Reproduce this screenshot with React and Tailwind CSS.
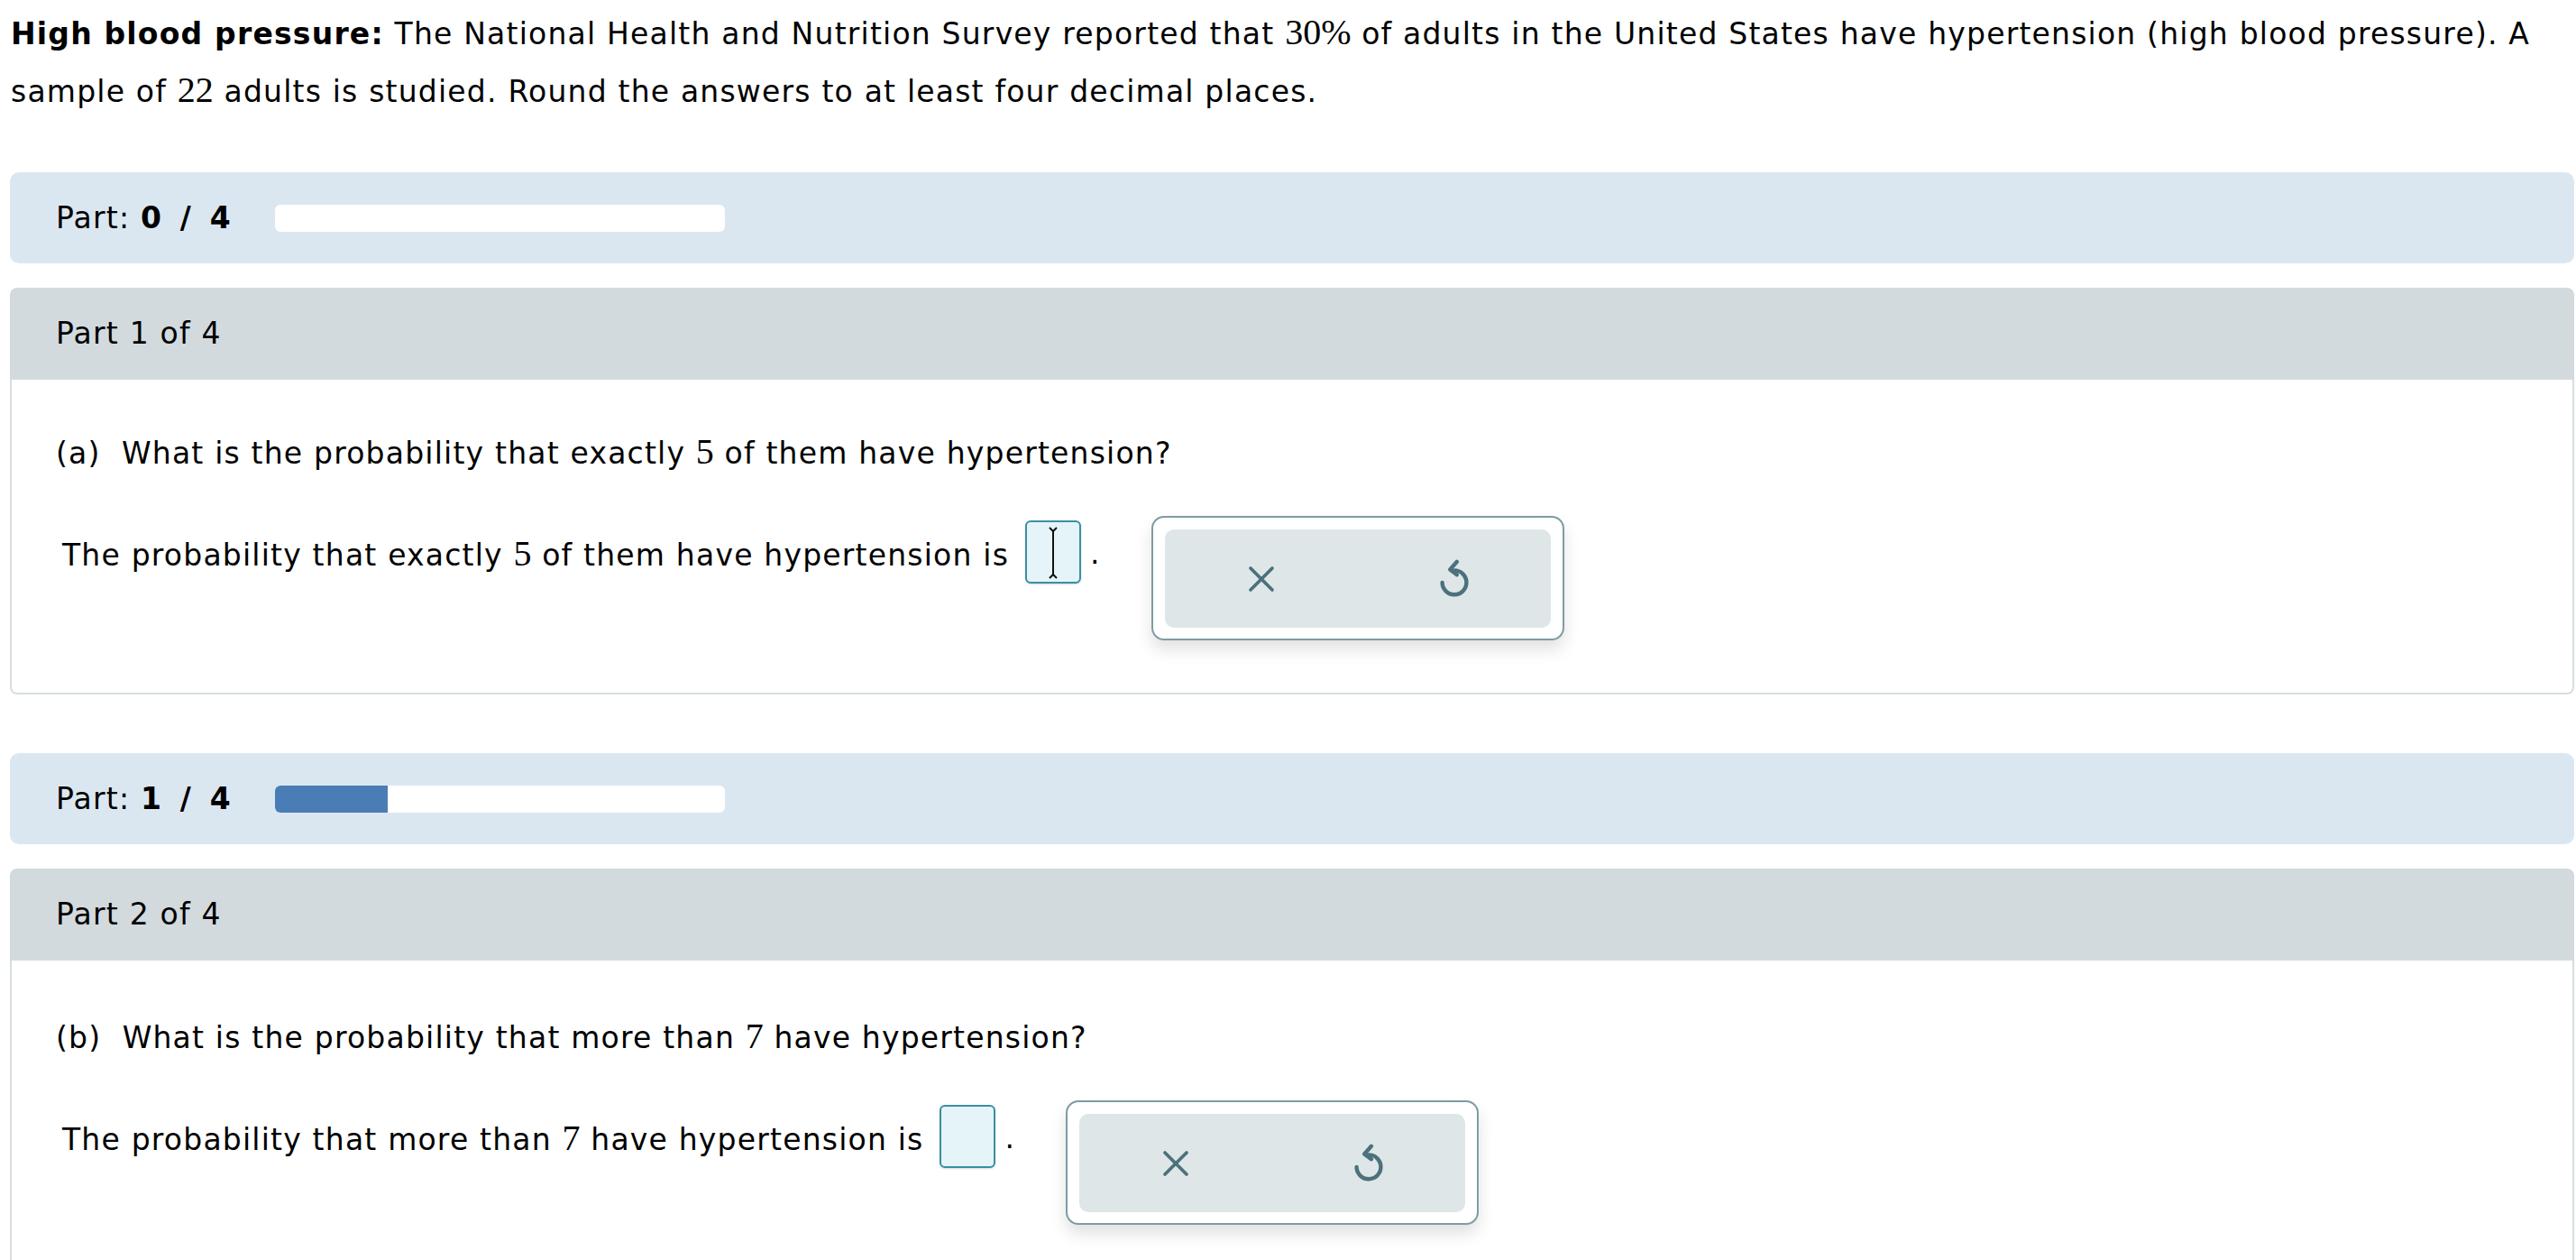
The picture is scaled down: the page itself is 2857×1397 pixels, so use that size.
import React from 'react';

const sans = { fontFamily: '"DejaVu Sans", Verdana, sans-serif' };

const M = ({ children }) => (
  <span className="text-[40px] tracking-normal" style={{ fontFamily: '"Liberation Serif", "Times New Roman", serif' }}>
    {children}
  </span>
);

const XIcon = () => (
  <svg width="36" height="36" viewBox="0 0 24 24" fill="none" stroke="#4b717c" strokeWidth="2.5" strokeLinecap="round">
    <path d="M4 4 L20 20" />
    <path d="M20 4 L4 20" />
  </svg>
);

const UndoIcon = () => (
  <svg width="46" height="50" viewBox="0 0 24 26" fill="none" stroke="#4b717c" strokeWidth="2.3" strokeLinecap="round" strokeLinejoin="round">
    <path d="M12 8 A7 7 0 1 1 5 15" />
    <path d="M13.5 3 L9.5 7.5 L13.5 10.5" />
  </svg>
);

const ProgressBar = ({ done }) => (
  <div className="flex h-[101px] items-center rounded-[10px] bg-[#dbe7f0] pl-[51px] text-[33px] tracking-[1.2px]">
    <span>
      Part: <b className="[word-spacing:7px]">{done} / 4</b>
    </span>
    <div className="ml-[48px] flex h-[30px] w-[499px] overflow-hidden rounded-[6px] bg-white">
      <div className="h-full bg-[#4a7db5]" style={{ width: `${(done / 4) * 100}%` }} />
    </div>
  </div>
);

const AnswerBox = ({ cursor }) => (
  <div className="relative mt-[5px] h-[70px] w-[62px] rounded-[6px] border-2 border-[#3a8fa3] bg-[#e5f4f9] shadow-[0_1px_2px_rgba(0,0,0,0.15)]">
    {cursor && (
      <svg className="absolute left-[22px] top-[4px]" width="14" height="60" viewBox="0 0 14 60" fill="none" stroke="#111" strokeWidth="2">
        <path d="M3 2 L7 6 L11 2" />
        <path d="M7 6 V54" />
        <path d="M3 58 L7 54 L11 58" />
      </svg>
    )}
  </div>
);

const Tools = () => (
  <div className="ml-[56px] h-[138px] w-[458px] rounded-[14px] border-2 border-[#7e9ba4] bg-white pb-[12px] pl-[13px] pr-[13px] pt-[13px] shadow-[0_10px_18px_rgba(0,0,0,0.12)]">
    <div className="flex h-full rounded-[10px] bg-[#dfe6e8]">
      <button className="flex flex-1 items-center justify-center">
        <XIcon />
      </button>
      <button className="flex flex-1 items-center justify-center">
        <UndoIcon />
      </button>
    </div>
  </div>
);

const PartCard = ({ n, question, answer, cursor, last }) => (
  <div className="mt-[27px]">
    <div className="flex h-[102px] items-center rounded-t-[8px] bg-[#d2dade] pl-[51px] text-[33px] tracking-[1.2px]">
      Part {n} of 4
    </div>
    <div className={`border-2 border-t-0 border-[#d6dee1] bg-white pl-[49px] ${last ? 'pb-[120px]' : 'rounded-b-[8px] pb-[58px]'}`}>
      <div className={`${last ? 'pt-[64px]' : 'pt-[60px]'} text-[33px] leading-[40px] tracking-[1.2px]`}>{question}</div>
      <div className="mt-[49px] flex items-start pl-[7px] text-[33px] leading-[40px] tracking-[1.2px]">
        <div className="mt-[22px] whitespace-nowrap">{answer}</div>
        <div className="ml-[18px]">
          <AnswerBox cursor={cursor} />
        </div>
        <div className="ml-[10px] mt-[22px]">.</div>
        <Tools />
      </div>
    </div>
  </div>
);

export default function App() {
  return (
    <div className="min-h-screen bg-white pl-[11px] pr-[2px] text-black" style={sans}>
      <p className="whitespace-nowrap pl-[1px] pt-[5px] text-[33px] leading-[62px] tracking-[1.2px]">
        <b>High blood pressure:</b> The National Health and Nutrition Survey reported that <M>30%</M> of adults in the
        United States have hypertension (high blood pressure). A
        <br />
        sample of <M>22</M> adults is studied. Round the answers to at least four decimal places.
      </p>

      <div className="mt-[58px]">
        <ProgressBar done={0} />
      </div>
      <PartCard
        n={1}
        cursor
        question={
          <>
            (a)&nbsp; What is the probability that exactly <M>5</M> of them have hypertension?
          </>
        }
        answer={
          <>
            The probability that exactly <M>5</M> of them have hypertension is
          </>
        }
      />

      <div className="mt-[65px]">
        <ProgressBar done={1} />
      </div>
      <PartCard
        n={2}
        last
        question={
          <>
            (b)&nbsp; What is the probability that more than <M>7</M> have hypertension?
          </>
        }
        answer={
          <>
            The probability that more than <M>7</M> have hypertension is
          </>
        }
      />
    </div>
  );
}
